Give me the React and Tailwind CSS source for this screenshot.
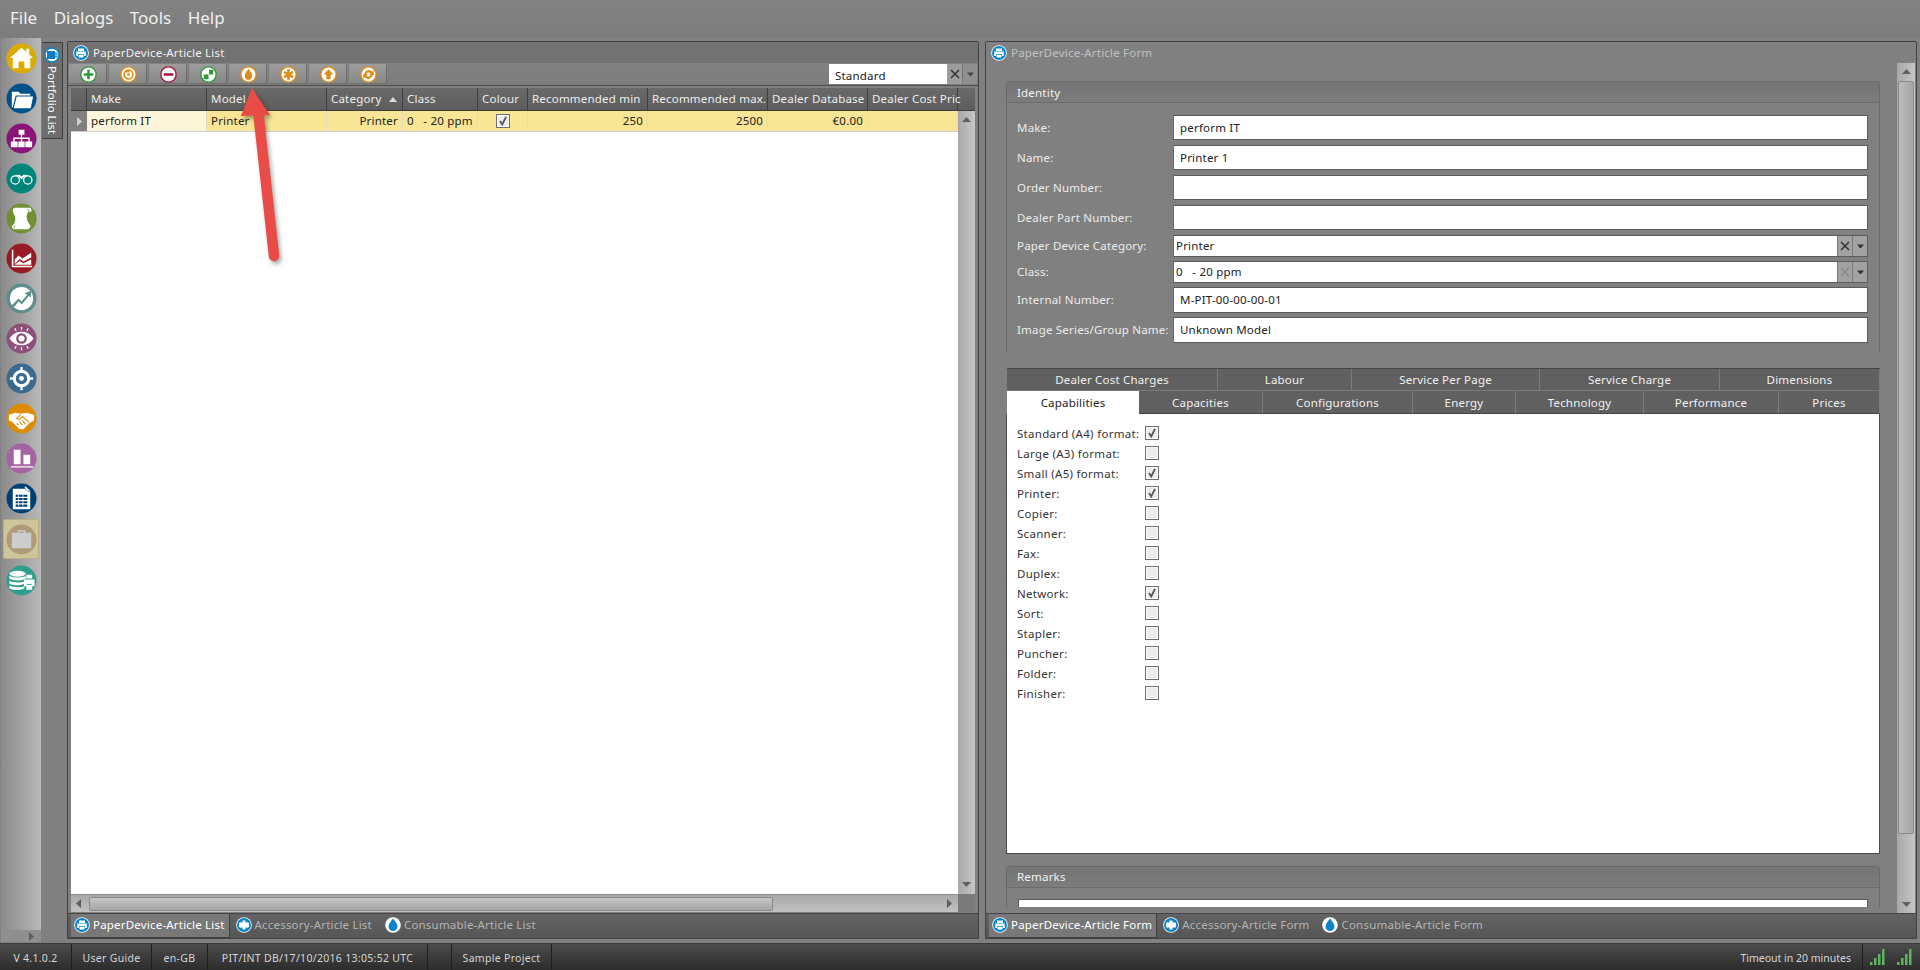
import React from "react";

const FONT = "font-['Noto_Sans','DejaVu_Sans',sans-serif]";

function Side({ c, children }) {
  return (
    <svg viewBox="0 0 32 32" className="w-[31px] h-[31px]">
      <circle cx="16" cy="16" r="15.5" fill={c} />
      {children}
    </svg>
  );
}

const sideIcons = [
  <Side c="#dcab00"><path d="M16 5 L4 15.5 L7 15.5 L7 26 L13 26 L13 19 L19 19 L19 26 L25 26 L25 15.5 L28 15.5 L24 11.8 L24 6 L21 6 L21 9.2 Z" fill="#fff" /></Side>,
  <Side c="#00518a"><path d="M6 9 L13 9 L15 11 L25 11 L25 13 L10 13 L7 25 L6 25 Z" fill="#fff" /><path d="M11 14 L28 14 L25.5 26 L8 26 Z" fill="#fff" /></Side>,
  <Side c="#8b1477"><path d="M13 7h6v5h-6z M15.3 12h1.4v3h7.8v4h-1.4v-2.6h-6.4V19h-1.4v-2.6H8.9V19H7.5v-4h7.8z M5 19h7v6H5z M12.7 19h6.6v6h-6.6z M20 19h7v6h-7z" fill="#fff" /></Side>,
  <Side c="#00857a"><g fill="none" stroke="#fff" strokeWidth="1.3"><circle cx="9.5" cy="17.5" r="4.300" /><circle cx="22.5" cy="17.500" r="4.300" /></g><path d="M9 12.500 L14 12 L16 14 L18 12 L23 12.500 L19 14 L16 17 L13 14 Z" fill="#fff" /></Side>,
  <Side c="#6f9033"><path d="M9 5 L24 5 C26 5 27 7 26 9 L23 9 C21 12 21 15 22 18 C23 21 26 23 25 25 C24 27 22 27 21 27 L9 27 C6.500 27 5 24 7 23 C9 21 10 18 9.500 15 C9 12 7 10.500 7 8 C7 6 8 5 9 5 Z" fill="#fff" /><path d="M22 6.500 C24 6.500 24 8.500 22.500 8.500 M9 25.500 C7.500 25.500 7.500 23.500 9.500 23.500" fill="none" stroke="#6f9033" strokeWidth=".8" /></Side>,
  <Side c="#981b25"><path d="M6 7h1.6v16.4H27V25H6z" fill="#fff" /><path d="M9 22 V17 L13 13 L17 16 L26 10 V15 L18 19 L14 16.5 Z M9 22.5 L14 18.5 L18 21 L26 17 V22.5 Z" fill="#fff" /></Side>,
  <Side c="#5e8d8d"><circle cx="16" cy="16" r="12" fill="#fff" /><path d="M6 23 L13 16 L16 19 L22 12 L19 10.5 L26 8 L25.5 15 L23.5 13.5 L16.5 22 L13 19 L8 25 Z" fill="#5e8d8d" /></Side>,
  <Side c="#8e4f7a"><path d="M3.5 16 C8 10 12 9 16 9 C20 9 24 10 28.5 16 C24 22 20 23 16 23 C12 23 8 22 3.5 16 Z" fill="#fff" /><circle cx="16" cy="16" r="5.5" fill="#8e4f7a" /><circle cx="16" cy="16" r="3.2" fill="#fff" /><g stroke="#fff" strokeWidth="1.3"><path d="M16 4v3M9 5.5l1.5 2.5M23 5.5l-1.5 2.5M16 25v3M9 26.5l1.5-2.5M23 26.5l-1.5-2.5" /></g></Side>,
  <Side c="#3a6b8f"><circle cx="16" cy="16" r="7.5" fill="none" stroke="#fff" strokeWidth="3" /><circle cx="16" cy="16" r="2.5" fill="#fff" /><path d="M14.8 4h2.4v6h-2.4z M14.8 22h2.4v6h-2.4z M4 14.8h6v2.4H4z M22 14.8h6v2.4h-6z" fill="#fff" /></Side>,
  <Side c="#dd8b00"><path d="M3 12 L10 10 L15 11 L21 10 L29 12 L29 18 L25 20 L18 27 L14 27 L6 19 L3 18 Z" fill="#fff" /><path d="M15 12 L11 16 L14 17 L17 14 L24 20 M11 21 L13 23 M14 19 L17 23 M17 18 L20 22" fill="none" stroke="#dd8b00" strokeWidth="1.1" /></Side>,
  <Side c="#a563a3"><path d="M8 7h7v15H8z M18 12h7v10h-7z M5 24h23v1.3H5z" fill="#fff" /></Side>,
  <Side c="#003f73"><path d="M7 6h15l3 3v18H7z" fill="#fff" /><path d="M10 12h12v2.2H10z M10 15.4h12v2.2H10z M10 18.8h12V21H10z M10 22.2h12v2.2H10z" fill="#003f73" /><path d="M13 12v12M17.5 12v12" stroke="#fff" strokeWidth=".8" /><path d="M20 3 L25 8 L23 9 L19 5 Z" fill="#fff" stroke="#003f73" strokeWidth=".5" /></Side>,
  <Side c="#b09a78"><path d="M12 9V6.5h8V9h-1.5V8h-5v1z M6 9h20v16H6z" fill="#cdcdcd" /></Side>,
  <Side c="#2f9e8c"><g fill="#fff"><ellipse cx="12" cy="9" rx="8.5" ry="3" /><path d="M3.5 11 C6 13.5 18 13.5 20.500 11 V14 C18 16.500 6 16.500 3.500 14 Z M3.500 16 C6 18.500 16 18.500 19 17 V19 C16 21.500 6 21.500 3.500 19 Z M3.500 21 C6 23.500 16 23.500 19 22 V24 C16 26.500 6 26.500 3.500 24 Z" /><path d="M21 10h6v4h-6z M18.500 15h11v7h-2.500v3.500h-6V22h-2.500z" /></g><path d="M21.500 20h5" stroke="#2f9e8c" /></Side>,
];

function Printer({ s = 16 }) {
  return (
    <svg viewBox="0 0 16 16" style={{ width: s, height: s }} className="shrink-0">
      <circle cx="8" cy="8" r="7.8" fill="#fff" />
      <circle cx="8" cy="8" r="7" fill="#0b84c8" />
      <path d="M5 3.500h6v2.500H5z M3.200 6.500h9.600v4.500H11V9H5v2H3.200z M5.500 9.800h5V12.500h-5z" fill="#fff" />
    </svg>
  );
}
function Puzzle({ s = 16 }) {
  return (
    <svg viewBox="0 0 16 16" style={{ width: s, height: s }} className="shrink-0">
      <circle cx="8" cy="8" r="7.8" fill="#fff" />
      <circle cx="8" cy="8" r="7" fill="#0b84c8" />
      <path d="M6.500 3.500h3v2h2v-.7l1.500 1.500v3.400l-1.500 1.500v-.7h-2v2h-3v-2h-2v.7L3 9.700V6.300l1.500-1.500v.7h2z" fill="#fff" />
    </svg>
  );
}
function Drop({ s = 16 }) {
  return (
    <svg viewBox="0 0 16 16" style={{ width: s, height: s }} className="shrink-0">
      <circle cx="8" cy="8" r="7.800" fill="#fff" />
      <path d="M8 1.500 C10 4.500 12.500 6.500 12.500 9.500 C12.500 12 10.500 14 8 14 C5.500 14 3.500 12 3.500 9.500 C3.500 6.500 6 4.500 8 1.500 Z" fill="#0b84c8" />
    </svg>
  );
}

function Tool({ c, children }) {
  return (
    <div className="w-[38px] h-[20px] flex items-center justify-center rounded-[2px] bg-linear-to-b from-[#9c9c9c] to-[#868686] shadow-[inset_-1px_-1px_0_#6e6e6e]">
      <svg viewBox="0 0 16 16" className="w-[17px] h-[17px]">
        <circle cx="8" cy="8" r="7.200" fill="#fff" stroke={c} strokeWidth="1.300" />
        {children}
      </svg>
    </div>
  );
}

const O = "#dd8d18";
const tools = [
  <Tool c="#2f9a3a"><path d="M6.800 3.500h2.400v3.300h3.300v2.400H9.200v3.300H6.800V9.200H3.500V6.800h3.300z" fill="#2f9a3a" /></Tool>,
  <Tool c={O}><circle cx="8" cy="8" r="4.200" fill="none" stroke={O} strokeWidth="1.500" /><path d="M5 4h4v2H6z" fill={O} /><circle cx="8" cy="8" r="1.200" fill={O} /></Tool>,
  <Tool c="#a8163c"><path d="M3.500 6.800h9v2.400h-9z" fill="#a8163c" /></Tool>,
  <Tool c="#2f9a3a"><path d="M3.500 8h4.500v4.500H3.500z M8.500 3.500h4v4.500h-4z" fill="#2f9a3a" /></Tool>,
  <Tool c={O}><path d="M8 2.500 C9.500 5 11.500 6.500 11.500 9.300 C11.500 11.500 10 13 8 13 C6 13 4.500 11.500 4.500 9.300 C4.500 6.500 6.500 5 8 2.500 Z" fill={O} /></Tool>,
  <Tool c={O}><path d="M6.700 3h2.600v3l2.300-1.500 1.300 2.200L10.300 8l2.600 1.300-1.300 2.200L9.300 10v3H6.700v-3l-2.300 1.500-1.300-2.200L5.700 8 3.100 6.700l1.300-2.200 2.300 1.500z" fill={O} /></Tool>,
  <Tool c={O}><path d="M8 3 L12.500 8 H10 V12.500 H6 V8 H3.500 Z" fill={O} /></Tool>,
  <Tool c={O}><path d="M4 7.500 A4.200 4.200 0 0 1 11.500 5.500 L13 4 V8.500 H8.500 L10 7 A2.500 2.500 0 0 0 5.800 7.500 Z M12 8.500 A4.200 4.200 0 0 1 4.500 10.500 L3 12 V7.500 H7.500 L6 9 A2.500 2.500 0 0 0 10.200 8.500 Z" fill={O} /></Tool>,
];

function Check({ on, cls = "" }) {
  return (
    <div className={`w-[14px] h-[14px] border border-[#6e6e6e] flex items-center justify-center bg-[#ececec] shadow-[inset_0_0_0_1px_#fff] ${cls}`}>
      {on && (
        <svg viewBox="0 0 12 12" className="w-[12px] h-[12px]">
          <path d="M3 6 L5.200 9.500 L9 2" fill="none" stroke="#555" strokeWidth="1.700" />
        </svg>
      )}
    </div>
  );
}

function Tri({ dir = "up", c = "#5f5f5f", small = false, cls = "" }) {
  const d = { up: "M0 6 L4.500 1 L9 6 Z", down: "M0 2 L4.500 7 L9 2 Z", left: "M7 0 L2 4.500 L7 9 Z", right: "M2 0 L7 4.500 L2 9 Z" }[dir];
  return (
    <svg viewBox="0 0 9 9" className={`${small ? "w-[7px] h-[7px]" : "w-[9px] h-[9px]"} ${cls}`}>
      <path d={d} fill={c} />
    </svg>
  );
}

function X({ c = "#333" }) {
  return (
    <svg viewBox="0 0 10 10" className="w-[10px] h-[10px]">
      <path d="M1 1 L9 9 M9 1 L1 9" stroke={c} strokeWidth="1.500" />
    </svg>
  );
}

function Strip({ items }) {
  return (
    <div className="h-[25px] shrink-0 flex items-stretch bg-linear-to-b from-[#636363] to-[#565656] border-t border-[#444]">
      {items.map((it, i) => (
        <div key={i} className={`flex items-center gap-[3px] text-[11.5px] pb-[2px] ${i === 0 ? "ml-[3px] pl-[3px] pr-[4px] bg-[#787878] border-r border-b border-[#3f3f3f] text-white" : "pl-[6px] pr-[7px] text-[#b4b4b4]"}`}>
          {it.icon}
          <span>{it.label}</span>
        </div>
      ))}
    </div>
  );
}

const cols = [
  { t: "Make", w: "w-[120px]", v: "perform IT", cell: "bg-[#fdf5d9]" },
  { t: "Model", w: "w-[120px]", v: "Printer 1" },
  { t: "Category", w: "w-[76px]", v: "Printer", r: true, sort: true },
  { t: "Class", w: "w-[75px]", v: "0   - 20 ppm" },
  { t: "Colour", w: "w-[50px]", check: true },
  { t: "Recommended min", w: "w-[120px]", v: "250", r: true },
  { t: "Recommended max.", w: "w-[120px]", v: "2500", r: true },
  { t: "Dealer Database", w: "w-[100px]", v: "€0.00", r: true },
  { t: "Dealer Cost Pric", w: "w-[90px]", v: "" },
];

const formRows = [
  { l: "Make:", v: "perform IT", cls: "h-[25px] mb-[5px]" },
  { l: "Name:", v: "Printer 1", cls: "h-[25px] mb-[5px]" },
  { l: "Order Number:", v: "", cls: "h-[25px] mb-[5px]" },
  { l: "Dealer Part Number:", v: "", cls: "h-[25px] mb-[5px]" },
  { l: "Paper Device Category:", v: "Printer", cls: "h-[22px] mb-[4px]", combo: "on" },
  { l: "Class:", v: "0   - 20 ppm", cls: "h-[22px] mb-[4px]", combo: "off" },
  { l: "Internal Number:", v: "M-PIT-00-00-00-01", cls: "h-[26px] mb-[4px]" },
  { l: "Image Series/Group Name:", v: "Unknown Model", cls: "h-[26px]" },
];

const tabs1 = [
  { t: "Dealer Cost Charges", w: "w-[211px]" },
  { t: "Labour", w: "w-[134px]" },
  { t: "Service Per Page", w: "w-[188px]" },
  { t: "Service Charge", w: "w-[180px]" },
  { t: "Dimensions", w: "w-[160px]" },
];
const tabs2 = [
  { t: "Capabilities", w: "w-[132px]", on: true },
  { t: "Capacities", w: "w-[124px]" },
  { t: "Configurations", w: "w-[150px]" },
  { t: "Energy", w: "w-[103px]" },
  { t: "Technology", w: "w-[128px]" },
  { t: "Performance", w: "w-[135px]" },
  { t: "Prices", w: "w-[101px]" },
];

const caps = [
  ["Standard (A4) format:", 1], ["Large (A3) format:", 0], ["Small (A5) format:", 1], ["Printer:", 1],
  ["Copier:", 0], ["Scanner:", 0], ["Fax:", 0], ["Duplex:", 0], ["Network:", 1], ["Sort:", 0],
  ["Stapler:", 0], ["Puncher:", 0], ["Folder:", 0], ["Finisher:", 0],
];

const status = [
  { t: "V 4.1.0.2", w: "w-[72px]" },
  { t: "User Guide", w: "w-[80px]" },
  { t: "en-GB", w: "w-[56px]" },
  { t: "PIT/INT DB/17/10/2016 13:05:52 UTC", w: "w-[220px]" },
  { t: "", w: "w-[24px]" },
  { t: "Sample Project", w: "w-[100px]" },
];

function Signal() {
  return (
    <svg viewBox="0 0 15 16" className="w-[15px] h-[16px]">
      <path d="M0 13h2.500v3H0z M4 9h2.500v7H4z M8 5h2.500v11H8z M12 0h2.500v16H12z" fill="#5fb55f" />
    </svg>
  );
}

export default function App() {
  return (
    <div className={`${FONT} relative w-[1920px] h-[970px] overflow-hidden flex flex-col bg-[#808080] text-[11.5px] tracking-[0.2px]`}>
      {/* menu */}
      <div className="h-[38px] shrink-0 flex items-center gap-[16.5px] pl-[10px] pb-[3px] text-[17px] tracking-normal text-[#f0f0f0] bg-linear-to-b from-[#838383] to-[#7c7c7c]">
        <span>File</span><span>Dialogs</span><span>Tools</span><span>Help</span>
      </div>

      {/* main */}
      <div className="flex-1 min-h-0 flex">
        {/* sidebar */}
        <div className="w-[41px] shrink-0 pl-[1px] flex flex-col">
          <div className="w-[40px] flex-1 bg-linear-to-r from-[#8b8b8b] via-[#a0a0a0] to-[#b8b8b8] flex flex-col">
            {sideIcons.map((ic, i) => (
              <div key={i} className={`h-[40px] flex items-center justify-center ${i === 12 ? "bg-[#cfc59a] border border-[#b9ae86] mx-[2px] my-[1px] h-[38px] rounded-[2px]" : ""}`}>
                {ic}
              </div>
            ))}
          </div>
          <div className="w-[40px] h-[12px] mb-[1px] bg-[#8f8f8f] flex items-center justify-end pr-[5px]">
            <Tri dir="right" c="#5e5e5e" />
          </div>
        </div>

        {/* portfolio */}
        <div className="w-[26px] shrink-0 pl-[1px] pt-[4px]">
          <div className="w-[21px] h-[97px] bg-[#6e6e6e] border border-[#3f3f3f] border-l-0 flex flex-col items-center pt-[4px]">
            <svg viewBox="0 0 16 16" className="w-[16px] h-[16px] shrink-0">
              <circle cx="8" cy="8" r="7" fill="#fff" stroke="#0b84c8" strokeWidth="1.500" />
              <path d="M3 4h8v8H3z" fill="#0b7dc0" />
              <path d="M11 6h2v4h-2z" fill="none" stroke="#0b7dc0" />
            </svg>
            <span className="[writing-mode:vertical-rl] mt-[3px] text-white text-[11.5px] tracking-normal leading-none whitespace-nowrap">Portfolio List</span>
          </div>
        </div>

        {/* left panel */}
        <div className="w-[912px] shrink-0 mt-[3px] mb-[4px] border border-[#414141] rounded-t-[2px] flex flex-col">
          <div className="h-[21px] shrink-0 bg-[#727272] flex items-center gap-[4px] pl-[5px] text-[#f0f0f0]">
            <Printer />
            <span>PaperDevice-Article List</span>
          </div>
          <div className="h-[23px] shrink-0 bg-linear-to-b from-[#828282] to-[#7c7c7c] border-b border-[#4e4e4e] flex items-start pt-[1px] pl-[1px] pr-[1px]">
            <div className="flex gap-[2px]">
              {tools.map((t, i) => <React.Fragment key={i}>{t}</React.Fragment>)}
            </div>
            <div className="ml-auto flex h-[20px]">
              <div className="w-[118px] bg-white pl-[6px] pt-[3px] flex items-center text-[#222]">Standard</div>
              <div className="w-[15px] bg-[#9d9d9d] flex items-center justify-center"><X /></div>
              <div className="w-[15px] bg-[#8f8f8f] border-l border-[#777] flex items-center justify-center"><Tri dir="down" c="#444" small /></div>
            </div>
          </div>

          <div className="flex-1 min-h-0 px-[3px] pt-[2px] flex flex-col">
            {/* header */}
            <div className="h-[23px] shrink-0 flex bg-linear-to-b from-[#6a6a6a] to-[#5d5d5d] border-b border-[#3d3d3d]">
              <div className="w-[16px] border-r border-[#3f3f3f]" />
              {cols.map((c, i) => (
                <div key={i} className={`${c.w} shrink-0 border-r border-[#3f3f3f] pl-[4px] flex items-center text-[#eee] whitespace-nowrap`}>
                  <span>{c.t}</span>
                  {c.sort && <svg viewBox="0 0 8 5" className="w-[8px] h-[5px] ml-[7px] shrink-0"><path d="M0 5 L4 0 L8 5 Z" fill="#ddd" /></svg>}
                </div>
              ))}
              <div className="flex-1" />
            </div>
            {/* body */}
            <div className="flex-1 min-h-0 flex bg-white">
              <div className="flex-1 min-w-0">
                <div className="h-[21px] flex border-b border-[#cfcfcf] bg-[#f8e595] text-[#222]">
                  <div className="w-[16px] bg-[#808080] flex items-center justify-center"><Tri dir="right" c="#d0d0d0" /></div>
                  {cols.map((c, i) => (
                    <div key={i} className={`${c.w} shrink-0 border-r border-[#e0dcc0] flex items-center whitespace-pre ${c.cell || ""} ${c.r ? "justify-end pr-[4px]" : c.check ? "justify-center" : "pl-[4px]"}`}>
                      {c.check ? <Check on /> : c.v}
                    </div>
                  ))}
                </div>
              </div>
              <div className="w-[17px] shrink-0 bg-linear-to-r from-[#a8a8a8] to-[#c6c6c6] flex flex-col items-center justify-between py-[5px]">
                <Tri dir="up" /><Tri dir="down" />
              </div>
            </div>
            {/* hscroll */}
            <div className="h-[18px] shrink-0 flex mb-[1px]">
              <div className="w-[887px] bg-linear-to-b from-[#a8a8a8] to-[#c2c2c2] border-t border-[#8a8a8a] flex items-center pl-[3px]">
                <Tri dir="left" />
                <div className="w-[684px] h-[14px] ml-[6px] rounded-[2px] bg-linear-to-b from-[#c6c6c6] to-[#a6a6a6] border border-[#8a8a8a]" />
                <Tri dir="right" cls="ml-auto mr-[4px]" />
              </div>
              <div className="flex-1 bg-[#7a7a7a]" />
            </div>
          </div>

          <Strip items={[
            { icon: <Printer />, label: "PaperDevice-Article List" },
            { icon: <Puzzle />, label: "Accessory-Article List" },
            { icon: <Drop />, label: "Consumable-Article List" },
          ]} />
        </div>

        {/* right panel */}
        <div className="w-[932px] shrink-0 ml-[6px] mt-[3px] mb-[4px] border border-[#414141] rounded-t-[2px] flex flex-col bg-[#808080]">
          <div className="h-[21px] shrink-0 flex items-center gap-[4px] pl-[5px] text-[#c0c0c0]">
            <Printer />
            <span>PaperDevice-Article Form</span>
          </div>
          <div className="flex-1 min-h-0 flex">
            <div className="flex-1 min-w-0 pb-[6px]">
              <div className="h-full overflow-hidden pl-[20px] pt-[18px]">
                {/* identity */}
                <div className="w-[874px] h-[271px] border-x border-t border-[#6a6a6a] rounded-t-[3px]">
                  <div className="h-[21px] pt-[2px] bg-linear-to-b from-[#757575] to-[#7c7c7c] border-b border-[#6c6c6c] pl-[10px] flex items-center text-[#f2f2f2]">Identity</div>
                  <div className="pl-[10px] pr-[11px] pt-[12px]">
                    {formRows.map((r, i) => (
                      <div key={i} className={`flex items-center ${r.cls}`}>
                        <div className="w-[156px] shrink-0 text-[#ececec] whitespace-nowrap">{r.l}</div>
                        <div className="flex-1 h-full flex bg-white border border-[#5c5c5c] border-l-[#6a6a6a]">
                          <div className={`flex-1 flex items-center whitespace-pre text-[#222] ${r.combo ? "pl-[2px]" : "pl-[6px]"}`}>{r.v}</div>
                          {r.combo && (
                            <>
                              <div className="w-[15px] bg-[#a2a2a2] border-l border-[#7a7a7a] flex items-center justify-center"><X c={r.combo === "on" ? "#333" : "#8a8a8a"} /></div>
                              <div className="w-[15px] bg-[#a2a2a2] border-l border-[#7a7a7a] flex items-center justify-center"><Tri dir="down" c="#333" small /></div>
                            </>
                          )}
                        </div>
                      </div>
                    ))}
                  </div>
                </div>

                {/* tabs */}
                <div className="w-[874px] mt-[16px]">
                  <div className="flex h-[22px] bg-[#606060] border-t border-[#454545] ml-[1px]">
                    {tabs1.map((t, i) => (
                      <div key={i} className={`${t.w} border-r border-[#7a7a7a] flex items-center justify-center text-[#f0f0f0]`}>{t.t}</div>
                    ))}
                  </div>
                  <div className="flex h-[24px] bg-[#606060] ml-[1px] border-t border-[#7a7a7a]">
                    {tabs2.map((t, i) => (
                      <div key={i} className={`${t.w} flex items-center justify-center pt-[1px] ${t.on ? "bg-white text-[#222]" : "border-r border-[#7a7a7a] text-[#f0f0f0] border-b border-b-[#454545]"}`}>{t.t}</div>
                    ))}
                  </div>
                  <div className="h-[440px] bg-white border-x border-b border-[#4a4a4a] pl-[10px] pt-[10px]">
                    {caps.map(([l, on], i) => (
                      <div key={i} className="h-[20px] flex items-center text-[#333] tracking-[0.3px]">
                        <div className="w-[128px] whitespace-nowrap">{l}</div>
                        <Check on={!!on} cls="mb-[2px]" />
                      </div>
                    ))}
                  </div>
                </div>

                {/* remarks */}
                <div className="w-[874px] mt-[12px] h-[60px] border-x border-t border-[#6a6a6a] rounded-t-[3px]">
                  <div className="h-[21px] bg-linear-to-b from-[#757575] to-[#7c7c7c] border-b border-[#6c6c6c] pl-[10px] flex items-center text-[#f2f2f2]">Remarks</div>
                  <div className="mx-[11px] mt-[11px] h-[40px] bg-white border border-[#5c5c5c]" />
                </div>
              </div>
            </div>
            {/* v scrollbar */}
            <div className="w-[18px] shrink-0 mr-[1px] bg-linear-to-r from-[#a8a8a8] to-[#c6c6c6] flex flex-col items-center">
              <div className="h-[18px] flex items-center"><Tri dir="up" /></div>
              <div className="w-[16px] h-[753px] rounded-[2px] bg-linear-to-r from-[#bcbcbc] to-[#a6a6a6] border border-[#8a8a8a]" />
              <div className="mt-auto h-[18px] flex items-center"><Tri dir="down" /></div>
            </div>
          </div>
          <Strip items={[
            { icon: <Printer />, label: "PaperDevice-Article Form" },
            { icon: <Puzzle />, label: "Accessory-Article Form" },
            { icon: <Drop />, label: "Consumable-Article Form" },
          ]} />
        </div>
      </div>

      {/* status */}
      <div className="h-[27px] shrink-0 flex items-center bg-linear-to-b from-[#4c4c4c] to-[#2c2c2c] border-t border-[#3a3a3a] text-[10.5px] tracking-[0.3px] text-[#d6d6d6]">
        {status.map((s, i) => (
          <div key={i} className={`${s.w} h-full flex items-center justify-center pt-[3px] border-r border-[#1f1f1f]`}>{s.t}</div>
        ))}
        <div className="ml-auto flex items-center h-full">
          <span className="mr-[11px] pt-[3px] tracking-normal">Timeout in 20 minutes</span>
          <div className="h-full border-r border-[#1f1f1f] mr-[7px]" />
          <Signal />
          <div className="w-[12px]" />
          <Signal />
          <div className="w-[8px]" />
        </div>
      </div>

      {/* annotation arrow */}
      <svg viewBox="0 0 60 200" className="absolute left-[230px] top-[80px] w-[60px] h-[200px] drop-shadow-[2px_3px_2px_rgba(0,0,0,0.35)]">
        <path d="M22 8 L11 36 L40 35 Z" fill="#e94b47" />
        <path d="M28 30 L44 176" stroke="#e94b47" strokeWidth="10.500" strokeLinecap="round" fill="none" />
      </svg>
    </div>
  );
}
